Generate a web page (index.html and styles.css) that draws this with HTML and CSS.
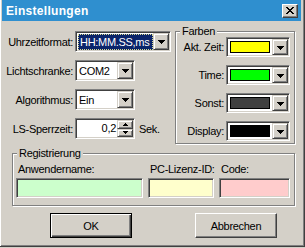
FILE: index.html
```html
<!DOCTYPE html>
<html lang="de">
  <head>
    <meta charset="UTF-8" />
    <title>Einstellungen</title>
    <link rel="stylesheet" href="styles.css">
  </head>
  <body>
    <div class="window">
      <div class="titlebar">
        <span class="title">Einstellungen</span>
        <span class="close-btn">
          <svg width="8" height="7" viewBox="0 0 8 7" shape-rendering="crispEdges">
            <path d="M0 0h2v1h-2z M6 0h2v1h-2z M1 1h2v1h-2z M5 1h2v1h-2z M2 2h4v1h-4z M3 3h2v1h-2z M2 4h4v1h-4z M1 5h2v1h-2z M5 5h2v1h-2z M0 6h2v1h-2z M6 6h2v1h-2z" fill="#000"/>
          </svg>
        </span>
      </div>

      <div class="content">
        <div class="top-row">
          <div class="settings">
            <label>Uhrzeitformat:</label>
            <div class="combo combo-wide">
              <span class="combo-text"><span class="selected">HH:MM.SS,ms</span></span>
              <span class="drop-btn"><svg width="7" height="4" shape-rendering="crispEdges"><path d="M0 0h7v1h-7z M1 1h5v1h-5z M2 2h3v1h-3z M3 3h1v1h-1z" fill="#000"/></svg></span>
            </div>

            <label>Lichtschranke:</label>
            <div class="combo combo-small">
              <span class="combo-text">COM2</span>
              <span class="drop-btn"><svg width="7" height="4" shape-rendering="crispEdges"><path d="M0 0h7v1h-7z M1 1h5v1h-5z M2 2h3v1h-3z M3 3h1v1h-1z" fill="#000"/></svg></span>
            </div>

            <label>Algorithmus:</label>
            <div class="combo combo-small">
              <span class="combo-text">Ein</span>
              <span class="drop-btn"><svg width="7" height="4" shape-rendering="crispEdges"><path d="M0 0h7v1h-7z M1 1h5v1h-5z M2 2h3v1h-3z M3 3h1v1h-1z" fill="#000"/></svg></span>
            </div>

            <label>LS-Sperrzeit:</label>
            <div class="spin-row">
              <div class="spinner">
                <span class="spin-text">0,2</span>
                <span class="spin-btns">
                  <span class="spin-btn"><svg width="5" height="3" shape-rendering="crispEdges"><path d="M2 0h1v1h-1z M1 1h3v1h-3z M0 2h5v1h-5z" fill="#000"/></svg></span>
                  <span class="spin-btn"><svg width="5" height="3" shape-rendering="crispEdges"><path d="M0 0h5v1h-5z M1 1h3v1h-3z M2 2h1v1h-1z" fill="#000"/></svg></span>
                </span>
              </div>
              <span class="unit">Sek.</span>
            </div>
          </div>

          <fieldset class="group colors">
            <legend>Farben</legend>
            <div class="color-grid">
              <label>Akt. Zeit:</label>
              <div class="combo combo-color">
                <span class="swatch swatch-yellow"></span>
                <span class="drop-btn"><svg width="7" height="4" shape-rendering="crispEdges"><path d="M0 0h7v1h-7z M1 1h5v1h-5z M2 2h3v1h-3z M3 3h1v1h-1z" fill="#000"/></svg></span>
              </div>

              <label>Time:</label>
              <div class="combo combo-color">
                <span class="swatch swatch-green"></span>
                <span class="drop-btn"><svg width="7" height="4" shape-rendering="crispEdges"><path d="M0 0h7v1h-7z M1 1h5v1h-5z M2 2h3v1h-3z M3 3h1v1h-1z" fill="#000"/></svg></span>
              </div>

              <label>Sonst:</label>
              <div class="combo combo-color">
                <span class="swatch swatch-grey"></span>
                <span class="drop-btn"><svg width="7" height="4" shape-rendering="crispEdges"><path d="M0 0h7v1h-7z M1 1h5v1h-5z M2 2h3v1h-3z M3 3h1v1h-1z" fill="#000"/></svg></span>
              </div>

              <label>Display:</label>
              <div class="combo combo-color">
                <span class="swatch swatch-black"></span>
                <span class="drop-btn"><svg width="7" height="4" shape-rendering="crispEdges"><path d="M0 0h7v1h-7z M1 1h5v1h-5z M2 2h3v1h-3z M3 3h1v1h-1z" fill="#000"/></svg></span>
              </div>
            </div>
          </fieldset>
        </div>

        <fieldset class="group registration">
          <legend>Registrierung</legend>
          <div class="reg-grid">
            <label>Anwendername:</label>
            <label>PC-Lizenz-ID:</label>
            <label>Code:</label>
            <div class="field field-green"></div>
            <div class="field field-yellow"></div>
            <div class="field field-pink"></div>
          </div>
        </fieldset>

        <div class="buttons">
          <button class="btn btn-default">OK</button>
          <button class="btn">Abbrechen</button>
        </div>
      </div>
    </div>
  </body>
</html>
```

FILE: styles.css
```css
html,
body {
  margin: 0;
  background: #d4d0c8;
}

body {
  font-family: 'Liberation Sans', Arial, sans-serif;
  font-size: 11px;
  letter-spacing: -0.3px;
  color: #000;
}

.window {
  width: 305px;
  height: 247px;
  box-sizing: border-box;
  border-right: 1px solid #404040;
  border-bottom: 1px solid #404040;
  box-shadow: inset 1px 0 0 #fff, inset -1px -1px 0 #808080;
}

.titlebar {
  height: 21px;
  margin: 0 3px 0 2px;
  padding: 0 3px 0 4px;
  background: #2f8fcf;
  display: flex;
  align-items: center;
  justify-content: space-between;
}

.title {
  color: #fff;
  font-weight: bold;
  font-size: 12px;
  letter-spacing: 0.3px;
}

.close-btn {
  width: 16px;
  height: 14px;
  box-sizing: border-box;
  background: #d4d0c8;
  border: 1px solid;
  border-color: #fff #404040 #404040 #fff;
  box-shadow: inset -1px -1px 0 #808080;
  display: flex;
  align-items: center;
  justify-content: center;
}

.content {
  padding: 5px 9px 0 12px;
}

.top-row {
  display: flex;
}

/* left column */
.settings {
  width: 163px;
  padding-top: 5px;
  display: grid;
  grid-template-columns: 61px auto;
  column-gap: 2px;
  row-gap: 8px;
  align-items: center;
  align-self: flex-start;
}

.settings label {
  justify-self: end;
  white-space: nowrap;
}

/* sunken 3d box */
.combo,
.spinner,
.field {
  box-sizing: border-box;
  background: #fff;
  border: 1px solid;
  border-color: #808080 #fff #fff #808080;
  box-shadow: inset 1px 1px 0 #404040, inset -1px -1px 0 #d4d0c8;
  padding: 1px;
  display: flex;
}

.combo {
  height: 21px;
}

.combo-wide {
  width: 96px;
}

.combo-small {
  width: 60px;
}

.combo-text {
  flex: 1;
  display: flex;
  align-items: center;
  padding-left: 2px;
  white-space: nowrap;
  overflow: hidden;
}

.selected {
  background: #0a246a;
  color: #fff;
  padding: 1px 1px;
  border: 1px dotted #d8d890;
  margin-left: -1px;
  line-height: 12px;
  flex: 1;
}

.drop-btn,
.spin-btn {
  width: 16px;
  box-sizing: border-box;
  background: #d4d0c8;
  border: 1px solid;
  border-color: #d4d0c8 #404040 #404040 #d4d0c8;
  box-shadow: inset 1px 1px 0 #fff, inset -1px -1px 0 #808080;
  display: flex;
  align-items: center;
  justify-content: center;
}

.drop-btn svg {
  margin-top: 1px;
}

.spin-row {
  display: flex;
  align-items: center;
  gap: 4px;
}

.spinner {
  width: 60px;
  height: 21px;
}

.spin-text {
  flex: 1;
  text-align: right;
  line-height: 17px;
  padding-right: 1px;
}

.spin-btns {
  display: flex;
  flex-direction: column;
}

.spin-btn {
  flex: 1;
}

/* group boxes */
.group {
  margin: 0;
  min-width: 0;
  border: 1px solid #808080;
  box-shadow: 1px 1px 0 #fff, inset 1px 1px 0 #fff;
}

.group legend {
  padding: 0 2px;
  line-height: 11px;
  background: #d4d0c8;
}

.colors {
  width: 120px;
  box-sizing: border-box;
  padding: 0 4px 2px 0;
}

.colors legend {
  margin-left: 4px;
}

.color-grid {
  display: grid;
  grid-template-columns: 1fr 64px;
  column-gap: 2px;
  row-gap: 8px;
  align-items: center;
}

.color-grid label {
  justify-self: end;
  white-space: nowrap;
}

.combo-color {
  height: 20px;
}

.swatch {
  flex: 1;
  margin: 2px 2px 2px 2px;
  border: 1px solid #000;
}

.swatch-yellow {
  background: #ffff00;
}

.swatch-green {
  background: #00ff00;
}

.swatch-grey {
  background: #404040;
}

.swatch-black {
  background: #000;
}

.registration {
  margin-top: 4px;
  width: 283px;
  box-sizing: border-box;
  padding: 0 4px 7px 3px;
}

.registration legend {
  margin-left: 1px;
}

.reg-grid {
  padding-top: 4px;
  display: grid;
  grid-template-columns: 127px 66px 71px;
  column-gap: 5px;
  row-gap: 2px;
}

.reg-grid label {
  line-height: 13px;
  padding-left: 2px;
  white-space: nowrap;
}

.field {
  height: 20px;
}

.field-green {
  background: #ccffcc;
}

.field-yellow {
  background: #ffffcc;
}

.field-pink {
  background: #ffcccc;
}

/* dialog buttons */
.buttons {
  margin-top: 7px;
  padding-left: 38px;
  display: flex;
  gap: 63px;
}

.btn {
  width: 82px;
  height: 25px;
  margin: 0;
  padding: 0;
  font-family: inherit;
  font-size: 11px;
  letter-spacing: inherit;
  color: #000;
  background: #d4d0c8;
  border: 1px solid;
  border-color: #fff #404040 #404040 #fff;
  box-shadow: inset -1px -1px 0 #808080;
}

.btn-default {
  border-color: #000;
  box-shadow: inset 1px 1px 0 #fff, inset -1px -1px 0 #404040, inset -2px -2px 0 #808080;
}
```
